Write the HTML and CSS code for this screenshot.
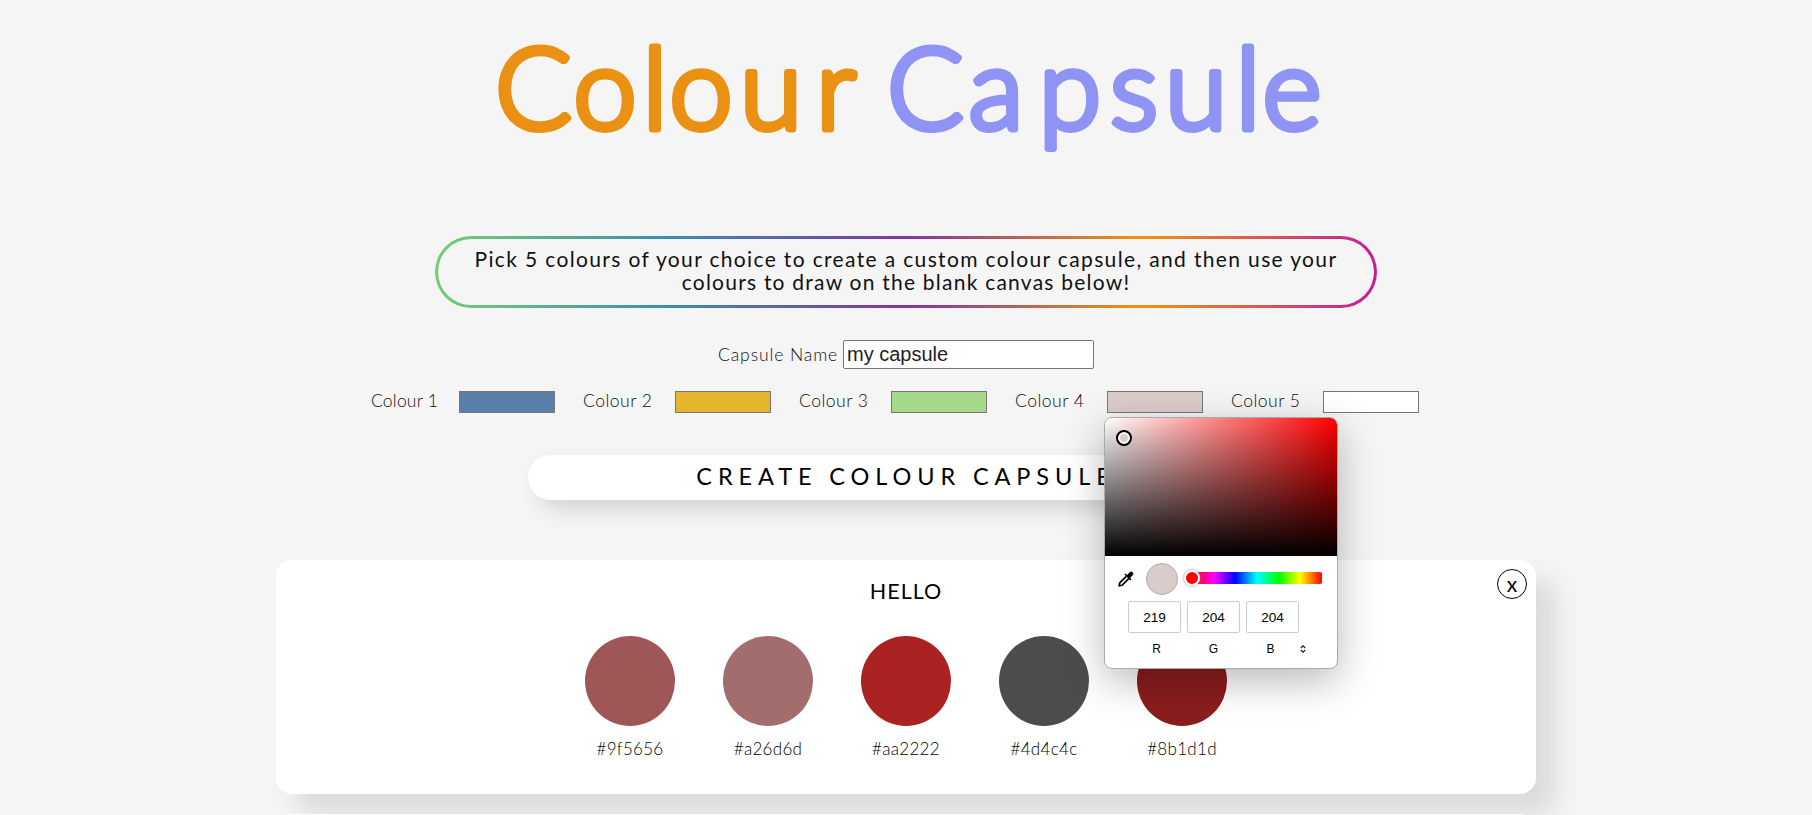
FILE: index.html
```html
<!DOCTYPE html>
<html lang="en">
<head>
<meta charset="utf-8">
<title>Colour Capsule</title>
<link rel="stylesheet" href="styles.css">
</head>
<body>
<div class="page">
<header class="header">
  <svg class="logo" width="880" height="160" viewBox="466 0 880 160" role="img" aria-label="Colour Capsule">
    <text class="logo-orange" y="129" x="533.500 605 655 701 771 836">Colour</text>
    <text class="logo-violet" y="129" x="925.500 996 1070 1134 1196 1248 1292">Capsule</text>
  </svg>
</header>
<main class="main">
  <p class="intro"><span class="intro-first">Pick 5 colours of your choice to create a custom colour capsule, and then use your</span><br><span class="intro-second">colours to draw on the blank canvas below!</span></p>
  <form class="form">
    <div class="name-row">
      <label class="name-label" for="name">Capsule Name</label>
      <input class="name-input" id="name" type="text" value="my capsule">
    </div>
    <div class="colours">
      <div class="colour"><span class="label">Colour 1</span><span class="swatch blue"></span></div>
      <div class="colour"><span class="label">Colour 2</span><span class="swatch yellow"></span></div>
      <div class="colour"><span class="label">Colour 3</span><span class="swatch green"></span></div>
      <div class="colour"><span class="label">Colour 4</span><span class="swatch pink"></span>
        <div class="picker">
          <div class="spectrum"><span class="marker"></span></div>
          <div class="controls">
            <svg class="dropper" width="16" height="16" viewBox="0 0 16 16"><path d="M8.300 5.300 1.700 11.900 1.200 14.800 4.100 14.300 10.700 7.700" fill="none" stroke="#000" stroke-width="1.700"/><path d="M6.500 3.600 7.700 2.500 9.100 3.900 11.900 1Q13.200-.1 14.600 1.300 16 2.800 14.900 4.100L12.100 6.900 13.500 8.300 12.300 9.500Z"/></svg>
            <span class="preview"></span>
            <span class="hue"><span class="thumb"></span></span>
          </div>
          <div class="channels">
            <span class="value">219</span><span class="value">204</span><span class="value">204</span>
          </div>
          <div class="names">
            <span class="channel">R</span><span class="channel">G</span><span class="channel">B</span>
            <svg class="toggle" width="6" height="8" viewBox="0 0 6 8"><path d="M.8 3 3 .8 5.200 3M.8 5 3 7.200 5.200 5" fill="none" stroke="#222" stroke-width="1.200"/></svg>
          </div>
        </div>
      </div>
      <div class="colour"><span class="label">Colour 5</span><span class="swatch white"></span></div>
    </div>
    <button class="create" type="button">CREATE COLOUR CAPSULE</button>
  </form>
  <section class="card">
    <button class="close" type="button">x</button>
    <h2 class="card-title">HELLO</h2>
    <div class="palette">
      <div class="item"><span class="dot rosewood"></span><span class="hex">#9f5656</span></div>
      <div class="item"><span class="dot dusty"></span><span class="hex">#a26d6d</span></div>
      <div class="item"><span class="dot red"></span><span class="hex">#aa2222</span></div>
      <div class="item"><span class="dot grey"></span><span class="hex">#4d4c4c</span></div>
      <div class="item"><span class="dot maroon"></span><span class="hex">#8b1d1d</span></div>
    </div>
  </section>
  <section class="card"></section>
</main>
</div>
</body>
</html>
```
FILE: styles.css
```css
* { box-sizing: border-box; }
body {
  margin: 0;
  background: #f5f5f5;
  color: #111;
  font-family: Lato, "Open Sans", sans-serif;
}
.page { height: 815px; overflow: hidden; }
.header { display: flex; justify-content: center; height: 236px; }
.logo { font-size: 113px; font-weight: 300; text-anchor: middle; stroke-width: 6.800px; stroke-linejoin: round; }
.logo-orange { fill: #ea9114; stroke: #ea9114; }
.logo-violet { fill: #8f93f4; stroke: #8f93f4; }
.main { display: flex; flex-direction: column; align-items: center; }
.intro {
  width: 942px;
  height: 72px;
  margin: 0;
  padding: 8px 0;
  border: 3px solid transparent;
  border-radius: 36px;
  background:
    linear-gradient(#f5f5f5, #f5f5f5) padding-box,
    linear-gradient(to right, #76cd75, #3b8eb0 25%, #8134a5 50%, #ee950c 75%, #c71b98) border-box;
  text-align: center;
  white-space: nowrap;
  font-size: 21px;
  line-height: 23px;
}
.intro-first { letter-spacing: 1.350px; }
.intro-second { letter-spacing: 1.230px; }
.form { display: flex; flex-direction: column; align-items: center; }
.name-row { display: flex; align-items: center; gap: 5px; margin-top: 32px; height: 29px; }
.name-label { width: 120px; font-size: 17.500px; font-weight: 300; letter-spacing: .9px; white-space: nowrap; }
.name-input {
  width: 251px;
  height: 29px;
  padding: 0 3px;
  border: 1px solid #767676;
  border-radius: 2px;
  background: #fff;
  color: #222;
  font: 20px "Liberation Sans", sans-serif;
}
.colours { display: flex; gap: 28px; margin: 22px 0 0 -22px; }
.colour { display: flex; position: relative; width: 188px; height: 22px; align-items: center; justify-content: space-between; }
.colour:first-child { width: 184px; }
.label { padding-bottom: 3px; font-size: 17.500px; font-weight: 300; letter-spacing: .5px; white-space: nowrap; }
.colour:first-child .label { letter-spacing: .2px; }
.swatch { width: 96px; height: 22px; border: 1px solid #767676; }
.blue { background: #5a80aa; }
.yellow { background: #e6b52e; }
.green { background: #a5d88b; }
.pink { background: #dbcccc; }
.white { background: #fff; }
.create {
  width: 756px;
  height: 45px;
  margin-top: 42px;
  padding: 0 0 4px;
  border: 0;
  border-radius: 23px;
  background: #fff;
  box-shadow: 10px 10px 20px #d4d4d4;
  color: #000;
  font: 400 23.500px Lato, sans-serif;
  letter-spacing: 5.900px;
}
.card {
  position: relative;
  flex-shrink: 0;
  width: 1260px;
  height: 234px;
  margin-top: 20px;
  border-radius: 16px;
  background: #fff;
  box-shadow: 20px 20px 25px #dbdbdb;
}
.form + .card { margin-top: 60px; }
.close {
  position: absolute;
  top: 9px;
  right: 9px;
  width: 30px;
  height: 30px;
  padding: 0 0 2px;
  border: 1px solid #000;
  border-radius: 50%;
  background: #fff;
  color: #000;
  font: 400 21px Lato, sans-serif;
}
.card-title { margin: 0; padding-top: 18px; text-align: center; font-size: 21.500px; font-weight: 400; line-height: 26px; letter-spacing: 1px; color: #000; }
.palette { display: flex; justify-content: center; gap: 48px; margin-top: 32px; }
.item { display: flex; flex-direction: column; align-items: center; width: 90px; }
.dot { width: 90px; height: 90px; border-radius: 50%; }
.rosewood { background: #9f5656; }
.dusty { background: #a26d6d; }
.red { background: #aa2222; }
.grey { background: #4d4c4c; }
.maroon { background: #8b1d1d; }
.hex { margin-top: 12px; color: #000; font-size: 17px; font-weight: 300; line-height: 22px; letter-spacing: .3px; }
.picker {
  position: absolute;
  z-index: 2;
  top: 26px;
  left: 89px;
  width: 234px;
  height: 252px;
  overflow: hidden;
  border: 1px solid #aaa;
  border-radius: 8px;
  background: #fff;
  box-shadow: 0 12px 40px rgba(0, 0, 0, .28);
  color: #000;
  font-family: "Liberation Sans", sans-serif;
}
.spectrum {
  position: relative;
  height: 138px;
  background: linear-gradient(to top, #000, transparent), linear-gradient(to right, #fff, #f00);
}
.marker {
  position: absolute;
  top: 12px;
  left: 11px;
  width: 16px;
  height: 16px;
  border: 2px solid #000;
  border-radius: 50%;
  background: #dbcccc;
  box-shadow: inset 0 0 0 2px #fff;
}
.controls { display: flex; height: 45px; padding: 7px 0 0 13px; }
.dropper { margin-top: 8px; }
.preview { width: 32px; height: 32px; margin-left: 12px; border: 1px solid #b8abab; border-radius: 50%; background: #dbcccc; }
.hue {
  position: relative;
  width: 130px;
  height: 12px;
  margin: 9px 0 0 14px;
  border-radius: 2px;
  background: linear-gradient(to right, #f00, #f0f 17%, #00f 33%, #0ff 50%, #0f0 67%, #ff0 83%, #f00);
}
.thumb {
  position: absolute;
  top: -2px;
  left: -8px;
  width: 16px;
  height: 16px;
  border: 2px solid #fff;
  border-radius: 50%;
  background: #f00;
  box-shadow: 0 0 3px #888;
}
.channels { display: flex; gap: 6px; padding-left: 23px; }
.value { width: 53px; height: 32px; border: 1px solid #ccc; border-radius: 2px; text-align: center; font-size: 13.600px; line-height: 31px; }
.names { display: flex; align-items: center; height: 14px; margin-top: 9px; padding-left: 23px; font-size: 12px; }
.channel { width: 57px; text-align: center; }
.toggle { margin-left: 1px; }
```
